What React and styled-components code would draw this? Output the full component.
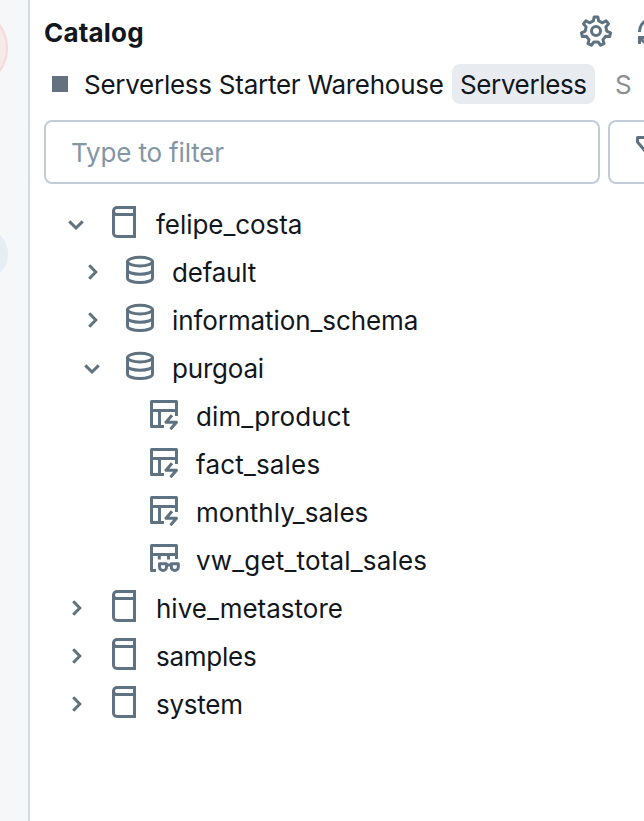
import React from "react";
import styled, { createGlobalStyle } from "styled-components";

const GlobalStyle = createGlobalStyle`
  * { box-sizing: border-box; }
  html, body { margin: 0; background: #fff; overflow: hidden; }
`;

const Page = styled.div`
  display: flex;
  width: 644px;
  height: 821px;
  overflow: hidden;
  background: #fff;
  color: #11171c;
  font: 400 26px/32px Inter, "Liberation Sans", sans-serif;
`;

const Rail = styled.aside`
  flex: none;
  width: 30px;
  overflow: hidden;
  display: flex;
  flex-direction: column;
  align-items: flex-end;
  padding: 8px 20px 0 0;
  background: #f6f7f9;
  border-right: 2px solid #d1d9e1;
`;

const RailDot = styled.span`
  flex: none;
  width: ${(p) => p.$size}px;
  height: ${(p) => p.$size}px;
  margin-bottom: ${(p) => p.$gap || 0}px;
  border-radius: 50%;
  background: ${(p) => p.$fill};
  border: 2px solid ${(p) => p.$edge};
`;

const Panel = styled.main`
  flex: 1;
  min-width: 0;
  padding-left: 14px;
  overflow: hidden;
`;

const Header = styled.header`
  display: flex;
  align-items: center;
  height: 62px;
  width: 624px;
`;

const Title = styled.h1`
  flex: none;
  width: 536px;
  margin: 4px 0 0;
  font-size: 26px;
  line-height: 32px;
  font-weight: 700;
  letter-spacing: 0.2px;
`;

const Icon = styled.svg`
  flex: none;
  display: block;
  width: 32px;
  height: 32px;
  margin-right: ${(p) => p.$gap || 0}px;
  fill: none;
  stroke: #5f7281;
  stroke-width: 3;
`;

const Warehouse = styled.div`
  display: flex;
  align-items: center;
  height: 44px;
  width: 640px;
  white-space: nowrap;
`;

const StopMark = styled.span`
  flex: none;
  width: 16px;
  height: 16px;
  margin: 0 16px 0 8px;
  background: #64727f;
`;

const Label = styled.span`
  flex: none;
  width: ${(p) => (p.$w ? p.$w + "px" : "auto")};
  padding-top: 2px;
  letter-spacing: ${(p) => p.$track || 0}px;
`;

const Tag = styled.span`
  flex: none;
  display: flex;
  width: 143px;
  height: 40px;
  padding-left: 8px;
  line-height: 42px;
  letter-spacing: -0.38px;
  margin-right: 20px;
  border-radius: 8px;
  background: #e8ebf0;
`;

const Size = styled.span`
  padding-top: 2px;
  color: #8b8f92;
`;

const Filters = styled.div`
  display: flex;
  gap: 8px;
  width: 700px;
  margin-top: 14px;
`;

const Input = styled.div`
  width: 556px;
  height: 64px;
  padding: 0 25px;
  line-height: 62px;
  letter-spacing: -0.15px;
  border: 2px solid #c0cdd8;
  border-radius: 8px;
  color: #8396a5;
`;

const FilterButton = styled.div`
  width: 72px;
  height: 64px;
  padding: 14px 0 0 22px;
  border: 2px solid #c0cdd8;
  border-radius: 8px;
`;

const Tree = styled.ul`
  list-style: none;
  margin: 16px 0 0;
  padding: 0;
`;

const Row = styled.li`
  display: flex;
  align-items: center;
  height: 48px;
  padding-left: ${(p) => p.$indent}px;

  & > svg:nth-last-of-type(1) { margin-top: -4px; }
`;

function Chevron({ open }) {
  return (
    <Icon $gap={16} viewBox="0 0 32 32">
      <path d={open ? "M9.3 13.4 16 20 22.7 13.4" : "M13.2 9.3 19.8 16 13.2 22.7"} />
    </Icon>
  );
}

function CatalogIcon() {
  return (
    <Icon $gap={16} viewBox="0 0 32 32">
      <path d="M26.5 1.5V30.5H9a3.5 3.5 0 0 1-3.5-3.5V5A3.5 3.5 0 0 1 9 1.5H28M26.5 8.5H8.5Q5.5 8.5 5.5 5" />
    </Icon>
  );
}

function SchemaIcon() {
  return (
    <Icon $gap={16} viewBox="0 0 32 32">
      <ellipse cx="16" cy="7.6" rx="12.5" ry="4.3" />
      <path d="M3.5 7.6V24.2C3.5 26.6 9.1 28.5 16 28.5S28.5 26.6 28.5 24.2V7.6M3.5 16C3.5 18.4 9.1 20.2 16 20.2S28.5 18.4 28.5 16" />
    </Icon>
  );
}

function TableIcon() {
  return (
    <Icon $gap={16} viewBox="0 0 32 32">
      <path d="M28.5 18V3.5H3.5V28.5H16M3.5 12.5H28.5M11.5 12.5V28.5" strokeLinejoin="round" />
      <path d="M24 17.2 18 24.3H28.5L22.5 31.2" strokeLinejoin="round" />
    </Icon>
  );
}

function ViewIcon() {
  return (
    <Icon $gap={16} viewBox="0 0 32 32">
      <path d="M28.5 17V3.5H3.5V28.5H8M3.5 12.4H28.5M11.3 12.4V17.5M20.5 12.4V17.5" strokeLinejoin="round" />
      <path d="M11.5 21.8H18.5V25a3.5 3.5 0 0 1-7 0ZM23.3 21.8H30.3V25a3.5 3.5 0 0 1-7 0ZM18 23H24" strokeLinejoin="round" />
    </Icon>
  );
}

// Seven-toothed cog outline, one trapezoid tooth per step round the centre.
const gearPath = (() => {
  const pts = [];
  const step = (Math.PI * 2) / 7;
  for (let i = 0; i < 7; i++) {
    const a = -Math.PI / 2 + i * step;
    [[-0.25, 10.8], [-0.13, 14.6], [0.13, 14.6], [0.25, 10.8]].forEach(([d, r]) => {
      pts.push(`${(16 + r * Math.cos(a + d)).toFixed(2)} ${(16.4 + r * Math.sin(a + d)).toFixed(2)}`);
    });
  }
  return `M${pts.join("L")}Z`;
})();

function GearIcon() {
  return (
    <Icon $gap={24} viewBox="0 0 32 32">
      <path d={gearPath} strokeLinejoin="round" />
      <circle cx="16" cy="16" r="4.5" />
    </Icon>
  );
}

function RefreshIcon() {
  return (
    <Icon viewBox="0 0 32 32">
      <path d="M3.5 17A12.5 12.5 0 0 1 26 9M28.5 2V10H20M28.5 16A12.5 12.5 0 0 1 7 26L3.5 22.5M3.5 29V22.5H12" />
    </Icon>
  );
}

function FunnelIcon() {
  return (
    <Icon viewBox="0 0 32 32">
      <path d="M5.5 1.5H30V6L20 16V28H14V16L5.5 6Z" strokeLinejoin="round" />
    </Icon>
  );
}

const icons = { catalog: CatalogIcon, schema: SchemaIcon, table: TableIcon, view: ViewIcon };

const nodes = [
  { name: "felipe_costa", kind: "catalog", indent: 16, open: true, track: -0.05 },
  { name: "default", kind: "schema", indent: 32, open: false, track: -0.2 },
  { name: "information_schema", kind: "schema", indent: 32, open: false, track: -0.08 },
  { name: "purgoai", kind: "schema", indent: 32, open: true, track: -0.2 },
  { name: "dim_product", kind: "table", indent: 104, track: 0.1 },
  { name: "fact_sales", kind: "table", indent: 104, track: 0.18 },
  { name: "monthly_sales", kind: "table", indent: 104, track: 0.03 },
  { name: "vw_get_total_sales", kind: "view", indent: 104, track: 0.18 },
  { name: "hive_metastore", kind: "catalog", indent: 16, open: false },
  { name: "samples", kind: "catalog", indent: 16, open: false, track: -0.25 },
  { name: "system", kind: "catalog", indent: 16, open: false, track: -0.25 },
];

export default function App() {
  return (
    <>
      <GlobalStyle />
      <Page>
        <Rail>
          <RailDot $size={80} $gap={139} $fill="#f6e9ea" $edge="#f5d8db" />
          <RailDot $size={54} $fill="#e7edf5" $edge="#e7edf5" />
        </Rail>
        <Panel>
          <Header>
            <Title>Catalog</Title>
            <GearIcon />
            <RefreshIcon />
          </Header>
          <Warehouse>
            <StopMark />
            <Label $w={368} $track={-0.26}>Serverless Starter Warehouse</Label>
            <Tag>Serverless</Tag>
            <Size>S</Size>
          </Warehouse>
          <Filters>
            <Input>Type to filter</Input>
            <FilterButton>
              <FunnelIcon />
            </FilterButton>
          </Filters>
          <Tree>
            {nodes.map(({ name, kind, indent, open, track }) => {
              const Kind = icons[kind];
              return (
                <Row key={name} $indent={indent}>
                  {open !== undefined && <Chevron open={open} />}
                  <Kind />
                  <Label $track={track}>{name}</Label>
                </Row>
              );
            })}
          </Tree>
        </Panel>
      </Page>
    </>
  );
}
